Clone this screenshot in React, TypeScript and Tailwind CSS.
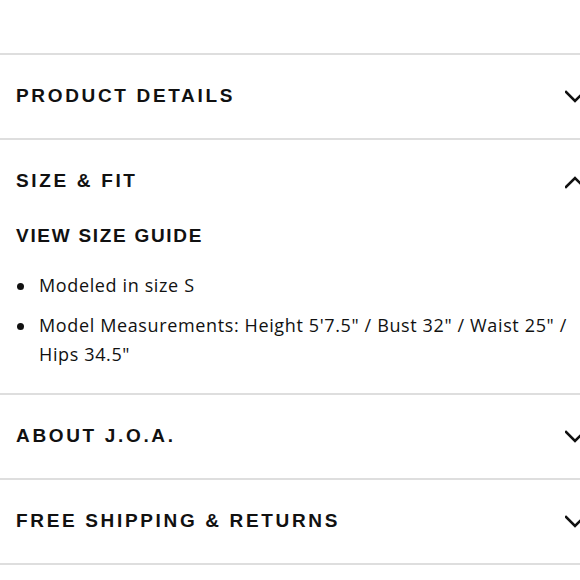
import React from "react";

type Section = { title: string; open?: boolean };

const sections: Section[] = [
  { title: "PRODUCT DETAILS" },
  { title: "SIZE & FIT", open: true },
  { title: "ABOUT J.O.A." },
  { title: "FREE SHIPPING & RETURNS" },
];

function Chevron({ up }: { up?: boolean }) {
  return (
    <svg width="20" height="14" viewBox="0 0 20 14" className="shrink-0">
      <polyline
        points={up ? "1,12 10,3 19,12" : "1,2 10,11 19,2"}
        fill="none"
        stroke="#111"
        strokeWidth="2.6"
        strokeLinecap="square"
      />
    </svg>
  );
}

export default function App() {
  return (
    <div className="w-[580px] h-[580px] overflow-hidden bg-white text-[#111]">
      <div className="w-[600px] pt-[53px]">
        {sections.map((s) => (
          <div key={s.title} className="border-t-2 border-[#dedede]">
            <div className="h-[83px] flex items-center justify-between pl-4 pr-[15px]">
              <span
                className="text-[19px] font-bold tracking-[0.14em]"
                style={{ fontFamily: '"Liberation Sans", Arial, sans-serif' }}
              >
                {s.title}
              </span>
              <Chevron up={s.open} />
            </div>
            {s.open && (
              <div className="pl-4 pb-[24px] -mt-[1px]">
                <div
                  className="text-[19px] font-bold tracking-[0.09em] leading-[28px]"
                  style={{ fontFamily: '"Liberation Sans", Arial, sans-serif' }}
                >
                  VIEW SIZE GUIDE
                </div>
                <ul
                  className="mt-[21px] w-[570px] space-y-[11px] text-[18px] leading-[29px] tracking-[0.035em]"
                  style={{ fontFamily: '"Open Sans", sans-serif' }}
                >
                  <li className="flex gap-[15px]">
                    <span className="mt-[12px] w-[7px] h-[7px] rounded-full bg-[#111] shrink-0 ml-[1px]" />
                    <span>Modeled in size S</span>
                  </li>
                  <li className="flex gap-[15px]">
                    <span className="mt-[12px] w-[7px] h-[7px] rounded-full bg-[#111] shrink-0 ml-[1px]" />
                    <span>
                      Model Measurements: Height 5'7.5" / Bust 32" / Waist 25" / Hips 34.5"
                    </span>
                  </li>
                </ul>
              </div>
            )}
          </div>
        ))}
        <div className="border-t-2 border-[#dedede]" />
      </div>
    </div>
  );
}
